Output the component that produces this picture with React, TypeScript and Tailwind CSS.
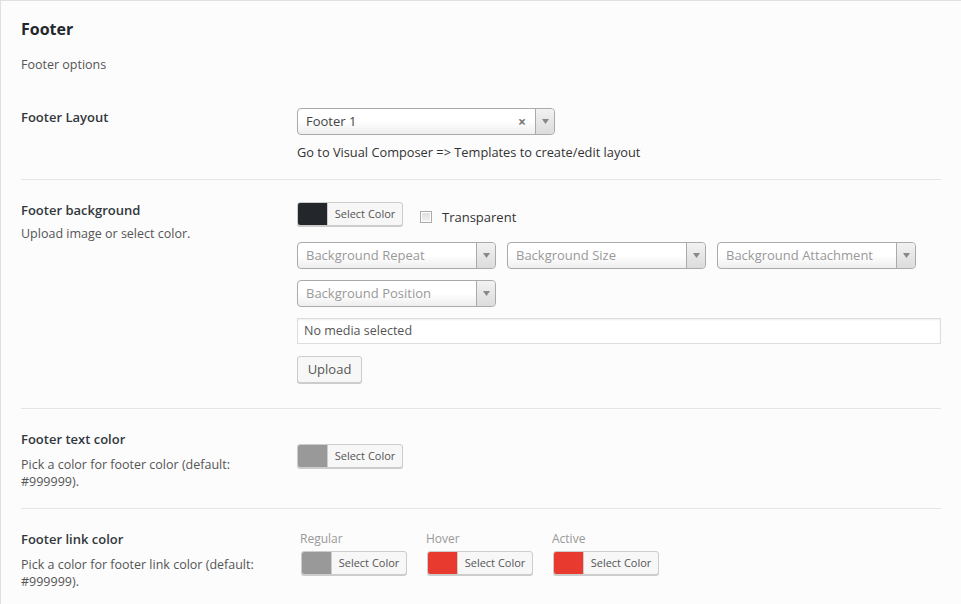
import React from "react";

const font = { fontFamily: '"Open Sans", "Noto Sans", sans-serif' };

function Arrow() {
  return (
    <div className="flex h-full w-[19px] items-center justify-center rounded-r-[4px] border-l border-[#aaa] bg-gradient-to-b from-[#f2f2f2] to-[#dcdcdc]">
      <svg width="7" height="5" viewBox="0 0 7 5">
        <path d="M0 0 L7 0 L3.5 5 Z" fill="#888" />
      </svg>
    </div>
  );
}

function Select({ text, placeholder, w, clear }: { text: string; placeholder?: boolean; w: string; clear?: boolean }) {
  return (
    <div
      className={`flex h-[27px] items-center rounded-[4px] border border-[#aaa] bg-gradient-to-b from-white from-50% to-[#eeeeee] ${w}`}
    >
      <div className={`flex-1 truncate pl-[8px] text-[13px] ${placeholder ? "text-[#999]" : "text-[#444]"}`}>{text}</div>
      {clear && <div className="mr-[9px] text-[14px] font-bold leading-none text-[#777]">×</div>}
      <Arrow />
    </div>
  );
}

function ColorButton({ color }: { color: string }) {
  return (
    <div className="flex h-[24px] w-[106px] overflow-hidden rounded-[3px] border border-[#ccc] bg-[#f7f7f7] shadow-[0_1px_0_#ccc]">
      <div className="h-full w-[30px] border-r border-[#ccc]" style={{ backgroundColor: color }} />
      <div className="flex flex-1 items-center justify-center text-[11px] text-[#555]">Select Color</div>
    </div>
  );
}

function Divider() {
  return <div className="h-px bg-[#e5e5e5]" />;
}

export default function App() {
  return (
    <div
      className="h-[604px] w-[961px] overflow-hidden border-l border-t border-[#e0e0e0] bg-[#fcfcfc] pl-[20px] pr-[20px] text-[#23282d]"
      style={font}
    >
      <div className="pt-[17px] text-[16px] font-bold leading-[22px]">Footer</div>
      <div className="mt-[15px] text-[12.5px] leading-[20px] text-[#555]">Footer options</div>

      {/* Row 1 */}
      <div className="mt-[33px] flex pb-[18px]">
        <div className="w-[276px] shrink-0 text-[13px] font-semibold leading-[18px] text-[#32373c]">Footer Layout</div>
        <div>
          <Select text="Footer 1" w="w-[258px] h-[26px]" clear />
          <div className="mt-[8px] text-[12.8px] leading-[18px] text-[#333]">
            Go to Visual Composer =&gt; Templates to create/edit layout
          </div>
        </div>
      </div>
      <Divider />

      {/* Row 2 */}
      <div className="flex pb-[25px] pt-[22px]">
        <div className="w-[276px] shrink-0 -mt-[1px]">
          <div className="text-[13px] font-semibold leading-[18px] text-[#32373c]">Footer background</div>
          <div className="mt-[6px] text-[12.5px] leading-[17px] text-[#555]">Upload image or select color.</div>
        </div>
        <div className="flex-1">
          <div className="flex items-start">
            <ColorButton color="#23262b" />
            <div className="ml-[17px] mt-[9px] flex items-center">
              <div className="h-[12px] w-[12px] border border-[#aaa] bg-gradient-to-b from-[#dcdcdc] to-[#f4f4f4] shadow-[inset_0_0_0_1px_#fff]" />
              <div className="ml-[10px] text-[13px] leading-[12px] text-[#333]">Transparent</div>
            </div>
          </div>
          <div className="mt-[16px] flex gap-[11px]">
            <Select text="Background Repeat" placeholder w="w-[199px]" />
            <Select text="Background Size" placeholder w="w-[199px]" />
            <Select text="Background Attachment" placeholder w="w-[199px]" />
          </div>
          <div className="mt-[11px] flex">
            <Select text="Background Position" placeholder w="w-[199px]" />
          </div>
          <div className="mt-[11px] flex h-[26px] items-center border border-[#ddd] bg-white pl-[6px] text-[12.5px] text-[#555] shadow-[inset_0_1px_2px_rgba(0,0,0,0.07)]">
            No media selected
          </div>
          <div className="mt-[12px] flex h-[27px] w-[65px] items-center justify-center rounded-[3px] border border-[#ccc] bg-[#f7f7f7] text-[13px] text-[#555] shadow-[0_1px_0_#ccc]">
            Upload
          </div>
        </div>
      </div>
      <Divider />

      {/* Row 3 */}
      <div className="flex pb-[18px] pt-[21px]">
        <div className="w-[276px] shrink-0">
          <div className="text-[13px] font-semibold leading-[18px] text-[#32373c]">Footer text color</div>
          <div className="mt-[8px] w-[230px] text-[12.5px] leading-[17px] text-[#555]">
            Pick a color for footer color (default: #999999).
          </div>
        </div>
        <div className="mt-[14px]">
          <ColorButton color="#999999" />
        </div>
      </div>
      <Divider />

      {/* Row 4 */}
      <div className="flex pt-[21px]">
        <div className="w-[276px] shrink-0">
          <div className="text-[13px] font-semibold leading-[18px] text-[#32373c]">Footer link color</div>
          <div className="mt-[8px] w-[245px] text-[12.5px] leading-[17px] text-[#555]">
            Pick a color for footer link color (default: #999999).
          </div>
        </div>
        <div className="flex gap-[20px] pl-[4px]">
          {[
            ["Regular", "#999999"],
            ["Hover", "#e93a30"],
            ["Active", "#e93a30"],
          ].map(([l, c]) => (
            <div key={l}>
              <div className="-ml-[1px] text-[12px] leading-[18px] text-[#999]">{l}</div>
              <div className="mt-[3px]">
                <ColorButton color={c} />
              </div>
            </div>
          ))}
        </div>
      </div>
    </div>
  );
}
